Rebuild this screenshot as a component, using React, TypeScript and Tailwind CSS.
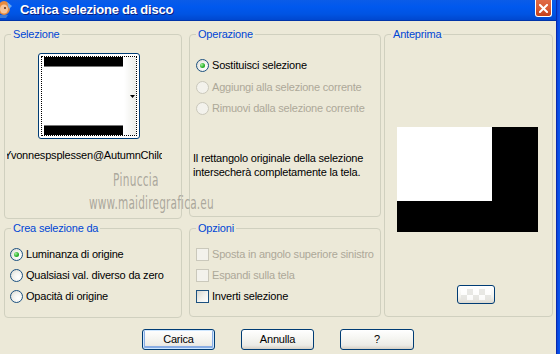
import React from "react";

function Radio({ checked, disabled }: { checked?: boolean; disabled?: boolean }) {
  return (
    <span
      className={`flex h-[13px] w-[13px] shrink-0 items-center justify-center rounded-full border ${
        disabled
          ? "border-[#CAC8BB] bg-[#F3F2EC]"
          : "border-[#1C5180] bg-[radial-gradient(circle_at_65%_65%,#FFFFFF_0%,#F3F3EF_45%,#D5D4CC_100%)]"
      }`}
    >
      {checked && (
        <span className="h-[5px] w-[5px] rounded-full bg-[radial-gradient(circle_at_35%_35%,#A8EFA0_0%,#2DB52D_55%,#168A16_100%)]" />
      )}
    </span>
  );
}

function Check({ disabled }: { disabled?: boolean }) {
  return (
    <span
      className={`h-[13px] w-[13px] shrink-0 border ${
        disabled
          ? "border-[#CAC8BB] bg-[#F3F2EC]"
          : "border-[#1C5180] bg-[linear-gradient(135deg,#D8D7CF_0%,#F2F2EE_55%,#FFFFFF_100%)]"
      }`}
    />
  );
}

function Group({
  title,
  className,
  children,
}: {
  title: string;
  className: string;
  children?: React.ReactNode;
}) {
  return (
    <fieldset className={`m-0 min-w-0 rounded-[4px] border border-[#D0D0BF] p-0 ${className}`}>
      <legend className="ml-[6px] px-[2px] leading-[13px] text-[#0046D5]">{title}</legend>
      {children}
    </fieldset>
  );
}

function Btn({ label, def }: { label: string; def?: boolean }) {
  return (
    <button
      className={`flex h-[21px] items-center justify-center rounded-[3px] border border-[#003C74] bg-[linear-gradient(to_bottom,#FFFFFF_0%,#F5F5F1_45%,#ECEBE6_80%,#D6D0C5_100%)] text-black ${
        def ? "shadow-[inset_0_0_0_1px_#CEE7FF,inset_0_-1px_0_2px_#89ADE4]" : ""
      } ${label === "?" ? "w-[74px]" : "w-[73px]"}`}
    >
      {label}
    </button>
  );
}

export default function App() {
  return (
    <div className="flex h-[354px] w-[560px] overflow-hidden bg-[#ECE9D8] font-['Liberation_Sans',Arial,sans-serif] text-[11px] tracking-[-0.2px] text-black">
      <div className="relative flex w-[556px] flex-col">
        {/* Title bar */}
        <div className="flex h-[20px] shrink-0 items-start bg-[linear-gradient(to_bottom,#0A5CE8_0%,#0058EE_35%,#0054E3_70%,#0047CF_100%)]">
          <svg width="14" height="18" viewBox="0 0 14 18" className="shrink-0">
            <ellipse cx="4" cy="8" rx="6" ry="7" fill="#E98B3C" />
            <ellipse cx="4" cy="9" rx="4" ry="4.5" fill="#F7C59A" />
            <path d="M7 2 L12 6 L9 9 Z" fill="#6AA7F0" />
            <circle cx="5" cy="8" r="1" fill="#5A2A10" />
            <path d="M0 15 L8 15 L6 18 L0 18 Z" fill="#3C7BD8" />
          </svg>
          <span className="ml-[6px] mt-[2px] text-[13px] font-bold leading-[15px] tracking-[-0.2px] text-white [text-shadow:1px_1px_0_#0A1E80]">
            Carica selezione da disco
          </span>
          <div className="ml-auto mr-[4px] flex h-[17px] w-[17px] items-center justify-center rounded-b-[3px] border border-t-0 border-white bg-[linear-gradient(to_bottom,#E06A47_0%,#D95B35_50%,#C3401A_100%)]">
            <svg width="9" height="9" viewBox="0 0 9 9">
              <path d="M1 1 L8 8 M8 1 L1 8" stroke="white" strokeWidth="2" strokeLinecap="square" />
            </svg>
          </div>
        </div>
        <div className="h-px w-full bg-[#0034A8]" />

        {/* Columns */}
        <div className="flex pt-[7px]">
          {/* Left column */}
          <div className="ml-[4px] flex w-[178px] flex-col">
            <Group title="Selezione" className="h-[191px]">
              <div className="ml-[33px] mt-[12px] h-[86px] w-[102px] rounded-[3px] border border-[#003C74] bg-white p-[2px]">
                <div className="flex h-full w-full border border-dotted border-black">
                  <div className="flex w-[82px] flex-col justify-between pl-[2px]">
                    <div className="h-[10px] w-[79px] border-b border-[#777] bg-black" />
                    <div className="h-[10px] w-[79px] border-t border-[#777] bg-black" />
                  </div>
                  <div className="flex flex-1 items-center justify-end bg-[linear-gradient(to_right,#FFFFFF,#EDEDE8)] pr-[1px]">
                    <svg width="5" height="3" viewBox="0 0 5 3">
                      <path d="M0 0 L5 0 L2.5 3 Z" fill="black" />
                    </svg>
                  </div>
                </div>
              </div>
              <div className="ml-[2px] mt-[9px] flex w-[155px] justify-center overflow-hidden whitespace-nowrap leading-[14px]">
                <span className="shrink-0">Yvonnespsplessen@AutumnChild</span>
              </div>
            </Group>
            <Group title="Crea selezione da" className="mt-[3px] h-[96px]">
              <div className="mt-[9px] flex flex-col pl-[5px]">
                <div className="flex h-[21px] items-center gap-[3px]">
                  <Radio checked />
                  <span>Luminanza di origine</span>
                </div>
                <div className="flex h-[21px] items-center gap-[3px]">
                  <Radio />
                  <span>Qualsiasi val. diverso da zero</span>
                </div>
                <div className="flex h-[21px] items-center gap-[3px]">
                  <Radio />
                  <span>Opacità di origine</span>
                </div>
              </div>
            </Group>
          </div>

          {/* Middle column */}
          <div className="ml-[7px] flex w-[192px] flex-col">
            <Group title="Operazione" className="h-[189px]">
              <div className="mt-[14px] flex flex-col pl-[6px]">
                <div className="flex h-[20px] items-center gap-[3px]">
                  <Radio checked />
                  <span>Sostituisci selezione</span>
                </div>
                <div className="mt-[2px] flex h-[20px] items-center gap-[3px] text-[#ACA899]">
                  <Radio disabled />
                  <span>Aggiungi alla selezione corrente</span>
                </div>
                <div className="mt-[1px] flex h-[20px] items-center gap-[3px] text-[#ACA899]">
                  <Radio disabled />
                  <span>Rimuovi dalla selezione corrente</span>
                </div>
              </div>
              <p className="mt-[33px] pl-[3px] leading-[14px]">
                Il rettangolo originale della selezione
                <br />
                intersecherà completamente la tela.
              </p>
            </Group>
            <Group title="Opzioni" className="mt-[5px] h-[95px]">
              <div className="mt-[9px] flex flex-col pl-[6px]">
                <div className="flex h-[21px] items-center gap-[3px] text-[#ACA899]">
                  <Check disabled />
                  <span>Sposta in angolo superiore sinistro</span>
                </div>
                <div className="flex h-[21px] items-center gap-[3px] text-[#ACA899]">
                  <Check disabled />
                  <span>Espandi sulla tela</span>
                </div>
                <div className="flex h-[21px] items-center gap-[3px]">
                  <Check />
                  <span>Inverti selezione</span>
                </div>
              </div>
            </Group>
          </div>

          {/* Right column */}
          <div className="ml-[3px] flex w-[169px] flex-col">
            <Group title="Anteprima" className="h-[289px]">
              <div className="ml-[12px] mt-[86px] flex h-[105px] w-[141px] items-start bg-black">
                <div className="h-[74px] w-[95px] bg-white" />
              </div>
              <div className="ml-[72px] mt-[53px] h-[19px] w-[38px] rounded-[3px] border border-[#003C74] bg-[linear-gradient(to_bottom,#FFFFFF_0%,#F3F3EF_60%,#DCD9D0_100%)] p-[3px]">
                <div className="h-full w-full bg-[repeating-conic-gradient(#E4E4E0_0%_25%,#FFFFFF_0%_50%)] bg-[length:12px_12px] opacity-80" />
              </div>
            </Group>
          </div>
        </div>

        {/* Buttons */}
        <div className="mt-[11px] flex justify-center gap-[26px]">
          <Btn label="Carica" def />
          <Btn label="Annulla" />
          <Btn label="?" />
        </div>

        {/* Watermark */}
        <span className="pointer-events-none absolute left-[113px] top-[170px] origin-left scale-x-[0.62] font-['DejaVu_Sans',sans-serif] text-[17px] leading-[20px] tracking-[0.5px] text-[#9A968D]/80">
          Pinuccia
        </span>
        <span className="pointer-events-none absolute left-[89px] top-[193px] origin-left scale-x-[0.62] whitespace-nowrap font-['DejaVu_Sans',sans-serif] text-[17px] leading-[20px] tracking-[0.3px] text-[#9A968D]/80">
          www.maidiregrafica.eu
        </span>
      </div>
      <div className="w-[4px] shrink-0 border-l border-[#0A2AAE] bg-[linear-gradient(to_right,#0843DB,#0A56EE)]" />
    </div>
  );
}
